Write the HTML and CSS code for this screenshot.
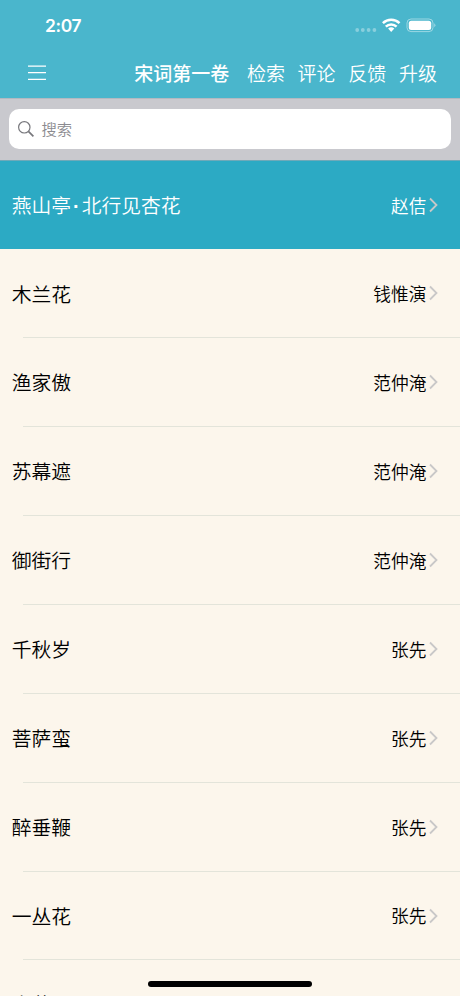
FILE: index.html
```
<!DOCTYPE html>
<html lang="zh-CN">
<head>
<meta charset="utf-8">
<title>宋词第一卷</title>
<link rel="stylesheet" href="styles.css">
</head>
<body>
<div class="screen">
  <header class="top">
    <div class="status">
      <span class="time">2:07</span>
      <svg class="status-icons" width="82" height="16" viewBox="0 0 82 16">
        <g fill="#fff" opacity=".35"><circle cx="3.2" cy="12" r="1.9"/><circle cx="8.8" cy="12" r="1.9"/><circle cx="14.6" cy="12" r="1.9"/><circle cx="20.4" cy="12" r="1.9"/></g>
        <g fill="none" stroke="#fff" stroke-width="2.5"><path d="M28.9 5.2a12 12 0 0 1 16.6 0"/><path d="M31.8 8.6a7.8 7.8 0 0 1 10.8 0"/></g>
        <path d="M34.1 10.6a4.6 4.6 0 0 1 6.2 0L37.2 13.9z" fill="#fff"/>
        <rect x="53" y="1" width="26" height="12.6" rx="4" fill="none" stroke="#fff" stroke-opacity=".45"/>
        <rect x="54.8" y="2.8" width="22.4" height="9.2" rx="2.5" fill="#fff"/>
        <path d="M80.3 5.3q2.2 2 0 4z" fill="#fff" opacity=".5"/>
      </svg>
    </div>
    <nav class="nav">
      <svg class="menu" width="18" height="16" viewBox="0 0 18 16" stroke="#fff" stroke-width="1.2"><path d="M0 1.2h18M0 7.7h18M0 14.3h18"/></svg>
      <h1 class="title">宋词第一卷</h1>
      <span class="action">检索</span><span class="action">评论</span><span class="action">反馈</span><span class="action">升级</span>
    </nav>
  </header>
  <div class="search">
    <div class="field">
      <svg width="17" height="17" viewBox="0 0 17 17" fill="none" stroke="#77777c" stroke-width="1.2"><circle cx="6.3" cy="6.3" r="5.7"/><path d="M10.4 10.4l5 5" stroke-width="1.7"/></svg>
      <span>搜索</span>
    </div>
  </div>
  <main class="list">
    <div class="row selected"><span class="name">燕山亭<i class="dot">·</i>北行见杏花</span><span class="author">赵佶</span><svg class="arrow" viewBox="0 0 9 16"><path d="M1 1.5l6.5 6.5L1 14.5"/></svg></div>
    <div class="row"><span class="name">木兰花</span><span class="author">钱惟演</span><svg class="arrow" viewBox="0 0 9 16"><path d="M1 1.5l6.5 6.5L1 14.5"/></svg></div>
    <div class="row"><span class="name">渔家傲</span><span class="author">范仲淹</span><svg class="arrow" viewBox="0 0 9 16"><path d="M1 1.5l6.5 6.5L1 14.5"/></svg></div>
    <div class="row"><span class="name">苏幕遮</span><span class="author">范仲淹</span><svg class="arrow" viewBox="0 0 9 16"><path d="M1 1.5l6.5 6.5L1 14.5"/></svg></div>
    <div class="row"><span class="name">御街行</span><span class="author">范仲淹</span><svg class="arrow" viewBox="0 0 9 16"><path d="M1 1.5l6.5 6.5L1 14.5"/></svg></div>
    <div class="row"><span class="name">千秋岁</span><span class="author">张先</span><svg class="arrow" viewBox="0 0 9 16"><path d="M1 1.5l6.5 6.5L1 14.5"/></svg></div>
    <div class="row"><span class="name">菩萨蛮</span><span class="author">张先</span><svg class="arrow" viewBox="0 0 9 16"><path d="M1 1.5l6.5 6.5L1 14.5"/></svg></div>
    <div class="row"><span class="name">醉垂鞭</span><span class="author">张先</span><svg class="arrow" viewBox="0 0 9 16"><path d="M1 1.5l6.5 6.5L1 14.5"/></svg></div>
    <div class="row"><span class="name">一丛花</span><span class="author">张先</span><svg class="arrow" viewBox="0 0 9 16"><path d="M1 1.5l6.5 6.5L1 14.5"/></svg></div>
    <div class="row last"><span class="name">山花子</span></div>
  </main>
  <div class="home"></div>
</div>
</body>
</html>
```
FILE: styles.css
```
* { box-sizing: border-box; }
body { margin: 0; overflow: hidden; font-family: "Noto Sans CJK SC", sans-serif; }
.screen { position: relative; width: 460px; height: 996px; overflow: hidden; background: #fcf6ec; }
.top { height: 98px; background: #4ab6cc; color: #fff; }
.status { height: 50px; display: flex; justify-content: space-between; padding: 0 24px 0 45px; }
.time { font: 600 17.4px/52px Inter, sans-serif; letter-spacing: -0.3px; }
.status-icons { display: block; margin-top: 18px; }
.nav { height: 46px; display: flex; align-items: center; padding: 0 23px 0 28px; font-size: 19px; line-height: 28px; }
.menu { display: block; }
.title { margin: 0 5px 0 auto; font-size: 19px; font-weight: 500; }
.action { margin-left: 12.7px; font-weight: 350; }
.search { height: 63px; padding: 10px 9px 0; background: #c9c9ce; border-top: 1px solid #b3b9c1; border-bottom: 1px solid #6fa9b9; }
.field { height: 40px; border-radius: 10px; background: #fff; display: flex; align-items: center; gap: 6.5px; padding-left: 9px; color: #8b8b90; font-size: 15.3px; line-height: 22px; font-weight: 350; }
.field span { margin-top: -2px; }
.row { position: relative; height: 88.9px; display: flex; align-items: center; padding: 0 22px 0 11.8px; color: #000; }
.row::after { content: ""; position: absolute; left: 23px; right: 0; bottom: 0; height: 1px; background: #e3e4da; }
.row.selected { height: 88.35px; background: #2caac4; color: #fff; }
.row.selected::after { display: none; }
.name { flex: 1; font-size: 19.8px; font-weight: 350; line-height: 30px; margin-top: -0.4px; }
.selected .name { margin-top: 0; }
.row.last { padding-top: 0; }
.last .name { margin-top: -2.6px; }
.dot { display: inline-block; width: 10.5px; text-align: center; font-style: normal; font-family: "Liberation Sans", sans-serif; font-weight: 700; }
.author { font-size: 17.7px; font-weight: 350; line-height: 26px; margin-top: -1.2px; }
.arrow { width: 9px; height: 16px; margin: -1px 0 0 2.6px; fill: none; stroke: #c9c8c8; stroke-width: 1.8; }
.home { position: absolute; left: 148px; bottom: 9px; width: 164px; height: 6px; border-radius: 3px; background: #000; }
```
